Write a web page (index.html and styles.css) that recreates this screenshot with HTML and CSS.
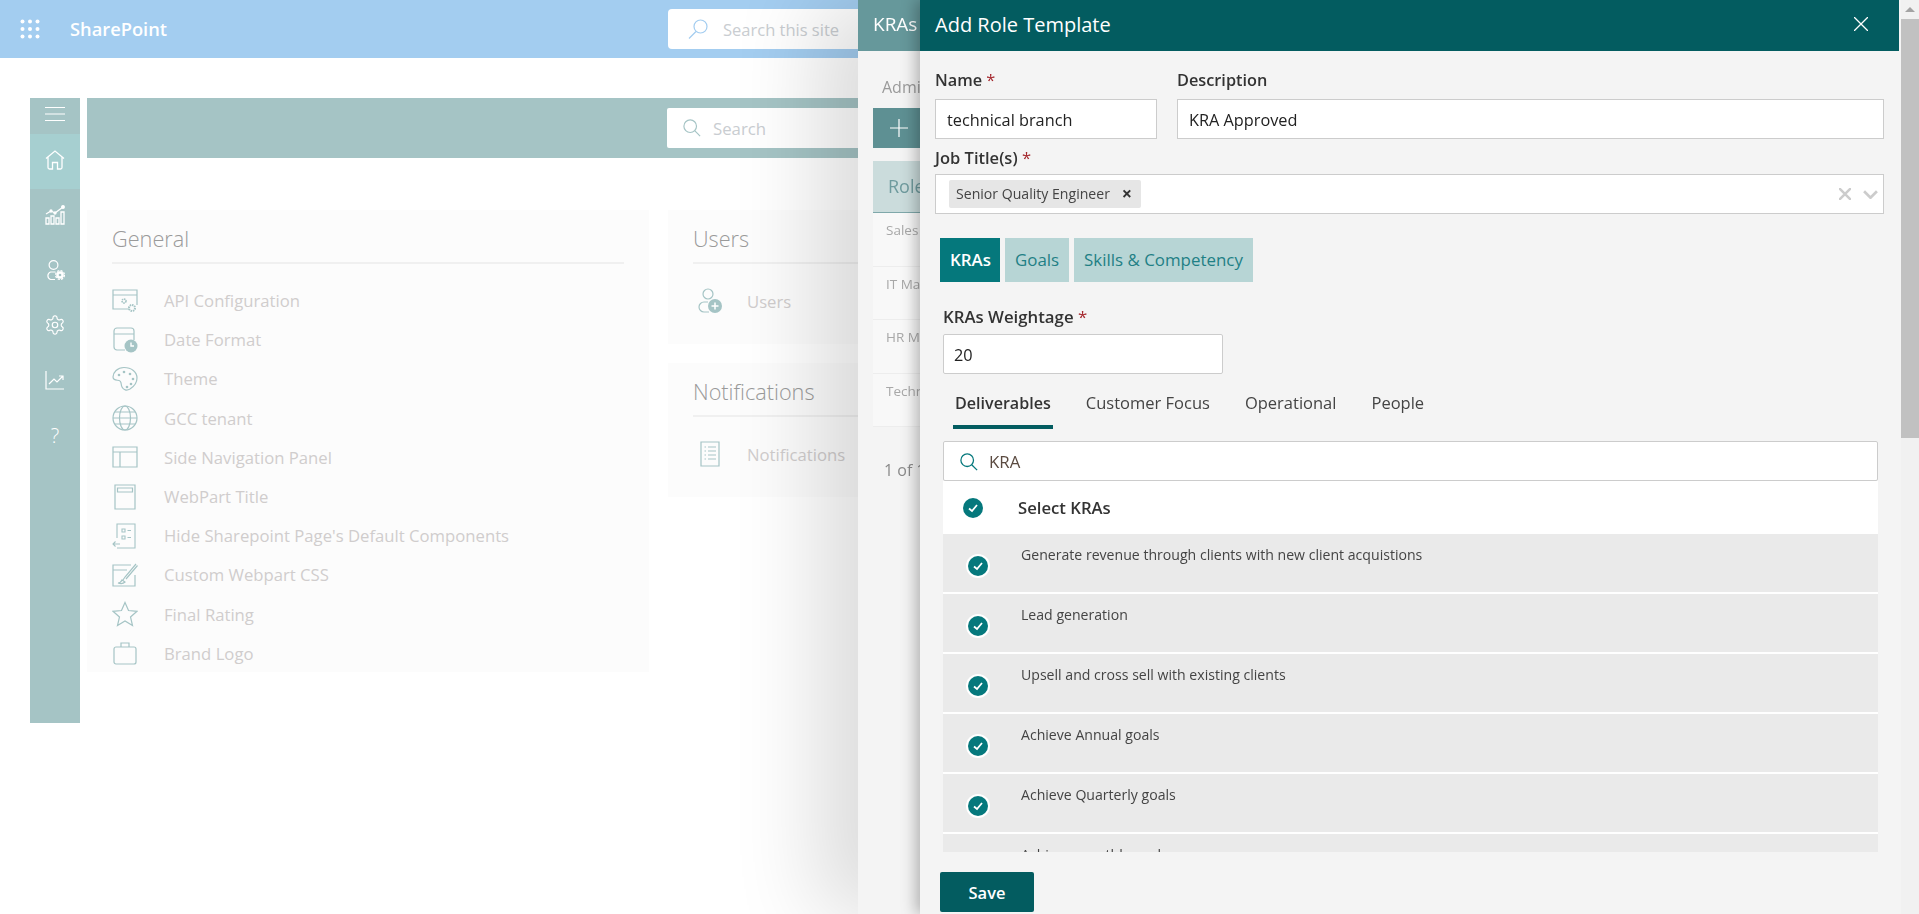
FILE: index.html
```html
<!DOCTYPE html>
<html lang="en">
<head>
    <meta charset="UTF-8">
    <title>Add Role Template</title>
    <link rel="stylesheet" href="styles.css">
</head>
<body>
    <!-- SharePoint top bar -->
    <header class="sp-bar">
        <svg class="waffle" viewBox="0 0 20 20"><g fill="#fff"><circle cx="2.5" cy="2.5" r="2"/><circle cx="10" cy="2.5" r="2"/><circle cx="17.5" cy="2.5" r="2"/><circle cx="2.5" cy="10" r="2"/><circle cx="10" cy="10" r="2"/><circle cx="17.5" cy="10" r="2"/><circle cx="2.5" cy="17.5" r="2"/><circle cx="10" cy="17.5" r="2"/><circle cx="17.5" cy="17.5" r="2"/></g></svg>
        <span class="sp-name">SharePoint</span>
        <div class="sp-search">
            <svg class="ico-20" viewBox="0 0 20 20" fill="none" stroke="#a3cdf0" stroke-width="1.2"><circle cx="12.5" cy="7.5" r="6.5"/><path d="M8 12.5 1 19.5"/></svg>
            <span>Search this site</span>
        </div>
    </header>

    <div class="page">
        <nav class="side">
            <div class="side-item side-menu"><svg class="ico-20" viewBox="0 0 20 20" stroke="#fff" stroke-width="1"><path d="M0 3.500h20M0 10h20M0 16.500h20"/></svg></div>
            <div class="side-item side-active"><svg class="ico-20" viewBox="0 0 20 20" fill="none" stroke="#fff" stroke-width="1.300"><path d="M1 8.500 10 1l9 7.500M3 7v10.500a1.500 1.500 0 0 0 1.500 1.500H7.500v-6.500h5V19h3a1.500 1.500 0 0 0 1.500-1.500V7"/></svg></div>
            <div class="side-item"><svg class="ico-20" viewBox="0 0 20 20" fill="none" stroke="#fff" stroke-width="1.300"><path d="M1 9l5-3 4 2 8-6"/><circle cx="6" cy="6" r="1" fill="#fff"/><circle cx="10" cy="8" r="1" fill="#fff"/><circle cx="18" cy="2" r="1.300" fill="#fff"/><path d="M1 13h3v6H1zM6 11h3v8H6zM11 13h3v6h-3zM16 7h3v12h-3z"/></svg></div>
            <div class="side-item"><svg class="ico-20" viewBox="0 0 20 20" fill="none" stroke="#fff" stroke-width="1.200"><circle cx="8.500" cy="5" r="4.400"/><path d="M10.500 12H5.500a4 4 0 0 0 0 7.500H10"/><circle cx="15" cy="15" r="3.800" fill="#fff" stroke="none"/><circle cx="15" cy="15" r="4.400" stroke-width="1.300" stroke-dasharray="2.200 1.250"/><circle cx="15" cy="15" r="1.300" fill="#a5c4c5" stroke="none"/></svg></div>
            <div class="side-item"><svg class="ico-20" viewBox="1 1 22 22" fill="none" stroke="#fff" stroke-width="1.300"><path d="M12.220 2h-.44a2 2 0 0 0-2 2v.18a2 2 0 0 1-1 1.730l-.43.25a2 2 0 0 1-2 0l-.15-.08a2 2 0 0 0-2.730.73l-.22.38a2 2 0 0 0 .73 2.730l.15.1a2 2 0 0 1 1 1.720v.51a2 2 0 0 1-1 1.740l-.15.09a2 2 0 0 0-.73 2.730l.22.38a2 2 0 0 0 2.730.73l.15-.08a2 2 0 0 1 2 0l.43.25a2 2 0 0 1 1 1.730V20a2 2 0 0 0 2 2h.44a2 2 0 0 0 2-2v-.18a2 2 0 0 1 1-1.730l.43-.25a2 2 0 0 1 2 0l.15.08a2 2 0 0 0 2.730-.73l.22-.39a2 2 0 0 0-.73-2.730l-.15-.08a2 2 0 0 1-1-1.740v-.5a2 2 0 0 1 1-1.740l.15-.09a2 2 0 0 0 .73-2.730l-.22-.38a2 2 0 0 0-2.730-.73l-.15.08a2 2 0 0 1-2 0l-.43-.25a2 2 0 0 1-1-1.730V4a2 2 0 0 0-2-2z"/><circle cx="12" cy="12" r="3"/></svg></div>
            <div class="side-item"><svg class="ico-20" viewBox="0 0 20 20" fill="none" stroke="#fff" stroke-width="1.200"><path d="M1 1v18h18M4 14l5-5 3 3 6-6M14 6h4v4"/></svg></div>
            <div class="side-item side-help">?</div>
        </nav>

        <main class="content">
            <div class="top-strip">
                <div class="strip-search">
                    <svg class="ico-18" viewBox="0 0 20 20" fill="none" stroke="#a5c4c5" stroke-width="1.300"><circle cx="8" cy="8" r="7"/><path d="m13 13 6 6"/></svg>
                    <span>Search</span>
                </div>
            </div>

            <div class="settings">
                <section class="card">
                    <h2>General</h2>
                    <ul class="card-list">
                        <li><svg class="ico-card" viewBox="0 0 26 26" fill="none" stroke="#a5c4c5" stroke-width="1.200"><path d="M17 21H1V2h24v15M1 7h24"/><circle cx="12" cy="13" r="2" stroke-dasharray="1.500 .6" stroke-width="1.600"/><circle cx="20" cy="20" r="3" stroke-dasharray="1.500 .8" stroke-width="2"/></svg>API Configuration</li>
                        <li><svg class="ico-card" viewBox="0 0 26 26" fill="none" stroke="#a5c4c5" stroke-width="1.200"><path d="M13 23H5a3 3 0 0 1-3-3V4a3 3 0 0 1 3-3h14a3 3 0 0 1 3 3v9M2 7h20"/><circle cx="19" cy="19" r="6.500" fill="#a5c4c5" stroke="none"/><path d="M19 15.500V19h3" stroke="#fff" stroke-width="1.400"/></svg>Date Format</li>
                        <li><svg class="ico-card" viewBox="0 0 26 26" fill="none" stroke="#a5c4c5" stroke-width="1.200"><path d="M12 1.500C5.500 1.500 1 6.500 1 11c0 3.500 3.500 3 6 3.500 3 .6 1.500 3.500 3 6.500 1.500 3 4.500 4 8 2 4-2.500 7-6 7-11C25 6 19.500 1.500 12 1.500Z"/><g fill="#a5c4c5" stroke="none"><circle cx="7" cy="9" r="1.300"/><circle cx="12" cy="6" r="1.300"/><circle cx="18" cy="8" r="1.300"/><circle cx="21" cy="13" r="1.300"/><circle cx="19" cy="18" r="1.300"/><circle cx="15" cy="21" r="1.300"/></g></svg>Theme</li>
                        <li><svg class="ico-card" viewBox="0 0 26 26" fill="none" stroke="#a5c4c5" stroke-width="1.200"><circle cx="13" cy="13" r="12"/><ellipse cx="13" cy="13" rx="5.500" ry="12"/><path d="M1 13h24M3 7h20M3 19h20"/></svg>GCC tenant</li>
                        <li><svg class="ico-card" viewBox="0 0 26 26" fill="none" stroke="#a5c4c5" stroke-width="1.200"><path d="M1 3h24v20H1zM1 8h24M8 8v15"/></svg>Side Navigation Panel</li>
                        <li><svg class="ico-card" viewBox="0 0 26 26" fill="none" stroke="#a5c4c5" stroke-width="1.200"><path d="M3 1h20v24H3zM5.500 4h15v4h-15z"/></svg>WebPart Title</li>
                        <li><svg class="ico-card" viewBox="0 0 26 26" fill="none" stroke="#a5c4c5" stroke-width="1.100"><path d="M5 15V1h18v24H5M8 21H1m2.500-2.500L1 21l2.500 2.500M10 6h3v3h-3zM10 13h3v3h-3zM15.500 7.500H19M15.500 14.500H19"/></svg>Hide Sharepoint Page's Default Components</li>
                        <li><svg class="ico-card" viewBox="0 0 26 26" fill="none" stroke="#a5c4c5" stroke-width="1.200"><path d="M23 13v11H1V3h18M1 8h14M24 2 13 15l-2 3M25.500 3.500 14 17"/><path d="M6 21c2 0 3-1 4-3l3 2c-1 1-4 2-7 1Z"/></svg>Custom Webpart CSS</li>
                        <li><svg class="ico-card" viewBox="0 0 26 26" fill="none" stroke="#a5c4c5" stroke-width="1.200"><path d="m13 1.500 3.500 8 8.500.8-6.500 5.700 2 8.500L13 20l-7.500 4.500 2-8.500L1 10.300l8.500-.8z"/></svg>Final Rating</li>
                        <li><svg class="ico-card" viewBox="0 0 26 26" fill="none" stroke="#a5c4c5" stroke-width="1.200"><path d="M4 7h18a2 2 0 0 1 2 2v13a2 2 0 0 1-2 2H4a2 2 0 0 1-2-2V9a2 2 0 0 1 2-2ZM9 7V3h8v4"/></svg>Brand Logo</li>
                    </ul>
                </section>
                <div class="settings-col">
                    <section class="card card-small">
                        <h2>Users</h2>
                        <ul class="card-list">
                            <li class="row-small"><svg class="ico-card" viewBox="0 0 26 26" fill="none" stroke="#a5c4c5" stroke-width="1.200"><circle cx="11" cy="6" r="5"/><path d="M11 14H7a5 5 0 0 0 0 10h5"/><circle cx="18" cy="18" r="7" fill="#a5c4c5" stroke="none"/><path d="M18 14.500v7M14.500 18h7" stroke="#fff" stroke-width="1.500"/></svg>Users</li>
                        </ul>
                    </section>
                    <section class="card card-small">
                        <h2>Notifications</h2>
                        <ul class="card-list">
                            <li class="row-small"><svg class="ico-card" viewBox="0 0 26 26" fill="none" stroke="#a5c4c5" stroke-width="1.200"><path d="M4 1h18v24H4zM7.500 6h1.500M11 6h8M7.500 10h1.500M11 10h8M7.500 14h1.500M11 14h8M7.500 18h1.500M11 18h8"/></svg>Notifications</li>
                        </ul>
                    </section>
                </div>
            </div>
        </main>
    </div>

    <!-- KRAs panel, mostly hidden behind the role template panel -->
    <aside class="panel-back">
        <div class="panel-back-head">KRAs</div>
        <div class="panel-back-body">
            <p class="back-crumb">Admin</p>
            <div class="back-add"><svg class="ico-18" viewBox="0 0 18 18" stroke="#fff" stroke-width="1.200"><path d="M9 0v18M0 9h18"/></svg></div>
            <div class="back-table">
                <div class="back-th">Role</div>
                <div class="back-td">Sales</div>
                <div class="back-td">IT Manager</div>
                <div class="back-td">HR Manager</div>
                <div class="back-td">Technical</div>
            </div>
            <p class="back-pager">1 of 1</p>
        </div>
    </aside>

    <!-- Add Role Template panel -->
    <aside class="panel">
        <div class="panel-head">
            <span>Add Role Template</span>
            <svg class="ico-close" viewBox="0 0 14 14" stroke="#fff" stroke-width="1.300"><path d="m0 0 14 14M14 0 0 14"/></svg>
        </div>
        <div class="panel-body">
            <div class="form-row">
                <div class="field field-name">
                    <label>Name <i>*</i></label>
                    <div class="input">technical branch</div>
                </div>
                <div class="field field-desc">
                    <label>Description</label>
                    <div class="input">KRA Approved</div>
                </div>
            </div>
            <div class="field">
                <label class="label-job">Job Title(s) <i>*</i></label>
                <div class="input multi">
                    <span class="chip">Senior Quality Engineer <b>×</b></span>
                    <svg class="multi-clear" viewBox="0 0 12 12" stroke="#ccc" stroke-width="2.500"><path d="m0 0 12 12M12 0 0 12"/></svg>
                    <svg class="multi-arrow" viewBox="0 0 14 8" fill="none" stroke="#ccc" stroke-width="2.500"><path d="m1 1 6 6 6-6"/></svg>
                </div>
            </div>

            <div class="tabs">
                <span class="tab tab-on">KRAs</span>
                <span class="tab">Goals</span>
                <span class="tab">Skills &amp; Competency</span>
            </div>

            <div class="kra-area">
                <div class="field">
                    <label class="label-weight">KRAs Weightage <i>*</i></label>
                    <div class="input input-weight">20</div>
                </div>

                <div class="pivots">
                    <span class="pivot pivot-on">Deliverables</span>
                    <span class="pivot">Customer Focus</span>
                    <span class="pivot">Operational</span>
                    <span class="pivot">People</span>
                </div>

                <div class="input kra-search">
                    <svg class="ico-18" viewBox="0 0 20 20" fill="none" stroke="#05787c" stroke-width="1.400"><circle cx="8" cy="8" r="7"/><path d="m13 13 6 6"/></svg>
                    <span>KRA</span>
                </div>

                <div class="select-all">
                    <svg class="check check-head" viewBox="0 0 20 20"><circle cx="10" cy="10" r="10" fill="#05787c"/><path d="m6 10.500 3 2.500 5-6" fill="none" stroke="#fff" stroke-width="1.800"/></svg>
                    <span>Select KRAs</span>
                </div>
                <div class="kra-list">
                    <div class="kra-row"><svg class="check" viewBox="0 0 24 24"><circle cx="12" cy="12" r="12" fill="#fff"/><circle cx="12" cy="12" r="10" fill="#05787c"/><path d="m8 12.500 3 2.500 5-6" fill="none" stroke="#fff" stroke-width="1.800"/></svg><span>Generate revenue through clients with new client acquistions</span></div>
                    <div class="kra-row"><svg class="check" viewBox="0 0 24 24"><circle cx="12" cy="12" r="12" fill="#fff"/><circle cx="12" cy="12" r="10" fill="#05787c"/><path d="m8 12.500 3 2.500 5-6" fill="none" stroke="#fff" stroke-width="1.800"/></svg><span>Lead generation</span></div>
                    <div class="kra-row"><svg class="check" viewBox="0 0 24 24"><circle cx="12" cy="12" r="12" fill="#fff"/><circle cx="12" cy="12" r="10" fill="#05787c"/><path d="m8 12.500 3 2.500 5-6" fill="none" stroke="#fff" stroke-width="1.800"/></svg><span>Upsell and cross sell with existing clients</span></div>
                    <div class="kra-row"><svg class="check" viewBox="0 0 24 24"><circle cx="12" cy="12" r="12" fill="#fff"/><circle cx="12" cy="12" r="10" fill="#05787c"/><path d="m8 12.500 3 2.500 5-6" fill="none" stroke="#fff" stroke-width="1.800"/></svg><span>Achieve Annual goals</span></div>
                    <div class="kra-row"><svg class="check" viewBox="0 0 24 24"><circle cx="12" cy="12" r="12" fill="#fff"/><circle cx="12" cy="12" r="10" fill="#05787c"/><path d="m8 12.500 3 2.500 5-6" fill="none" stroke="#fff" stroke-width="1.800"/></svg><span>Achieve Quarterly goals</span></div>
                    <div class="kra-row"><svg class="check" viewBox="0 0 24 24"><circle cx="12" cy="12" r="12" fill="#fff"/><circle cx="12" cy="12" r="10" fill="#05787c"/></svg><span>Achieve monthly goals</span></div>
                </div>
            </div>

            <button class="save">Save</button>
        </div>
    </aside>

    <!-- browser scrollbar -->
    <div class="scrollbar">
        <div class="scroll-up"></div>
        <div class="scroll-thumb"></div>
    </div>
</body>
</html>
```

FILE: styles.css
```css
* {
    box-sizing: border-box;
}
html, body {
    height: 100%;
}
body {
    margin: 0;
    background-color: #fff;
    font-family: "Open Sans", "Noto Sans", sans-serif;
    color: #333;
    overflow: hidden;
}
ul {
    list-style: none;
    margin: 0;
    padding: 0;
}
.ico-20 {
    width: 20px;
    height: 20px;
    flex: none;
}
.ico-18 {
    width: 18px;
    height: 18px;
    flex: none;
}

/* top bar */
.sp-bar {
    height: 58px;
    background-color: #a3cdf0;
    display: flex;
    align-items: center;
    padding-left: 20px;
}
.waffle {
    width: 20px;
    height: 20px;
}
.sp-name {
    margin-left: 30px;
    margin-bottom: 2px;
    width: 598px;
    color: #fff;
    font-size: 18.300px;
    font-weight: 600;
}
.sp-search {
    width: 300px;
    height: 40px;
    background-color: #fff;
    border-radius: 4px;
    display: flex;
    align-items: center;
    padding-left: 20px;
    gap: 15px;
    font-size: 16.500px;
    color: #c9cdd1;
}

/* page */
.page {
    display: flex;
    padding: 40px 0 0 30px;
}
.side {
    width: 50px;
    height: 625px;
    background-color: #a5c4c5;
    flex: none;
}
.side-item {
    height: 55px;
    padding-bottom: 3px;
    display: flex;
    align-items: center;
    justify-content: center;
}
.side-menu {
    height: 36px;
    padding-bottom: 5px;
}
.side-active {
    background-color: #a6cfd0;
    padding-bottom: 4px;
}
.side-help {
    color: #fff;
    font-size: 20px;
    font-weight: 300;
}
.content {
    margin-left: 7px;
    flex: 1;
}
.top-strip {
    height: 60px;
    background-color: #a5c4c5;
    padding: 10px 0 0 580px;
}
.strip-search {
    width: 300px;
    height: 40px;
    background-color: #fff;
    border-radius: 2px;
    display: flex;
    align-items: center;
    padding-left: 16px;
    gap: 12px;
    font-size: 16.800px;
    color: #c9cdd1;
}
.settings {
    display: flex;
    gap: 19px;
    margin-top: 52px;
    align-items: flex-start;
}
.card {
    width: 562px;
    height: 462px;
    background-color: #fcfcfc;
    padding: 11px 25px 0;
}
.card h2 {
    margin: 0;
    height: 43px;
    font-size: 21.700px;
    line-height: 36px;
    font-weight: 300;
    color: #9a9a9a;
    border-bottom: 2px solid #f0f0f0;
}
.card-list {
    padding-top: 17px;
}
.card-list li {
    height: 39.200px;
    display: flex;
    align-items: center;
    gap: 26px;
    font-size: 16.700px;
    color: #d0cdcd;
}
.ico-card {
    width: 26px;
    height: 26px;
    flex: none;
}
.settings-col {
    display: flex;
    flex-direction: column;
    gap: 19px;
}
.card-small {
    width: 560px;
    height: 134px;
}
.card-list .row-small {
    height: 40px;
    padding-left: 4px;
    gap: 24px;
}

/* back panel */
.panel-back {
    position: fixed;
    top: 0;
    left: 858px;
    right: 0;
    bottom: 0;
    background-color: #f4f4f4;
    box-shadow: -40px 0 80px rgba(0, 0, 0, 0.14);
}
.panel-back-head {
    height: 51px;
    background-color: #66989b;
    color: #fff;
    font-size: 19px;
    line-height: 48px;
    padding-left: 15px;
}
.panel-back-body {
    padding: 0 0 0 15px;
}
.back-crumb {
    margin: 24px 0 0 9px;
    height: 33px;
    font-size: 16px;
    line-height: 24px;
    color: #9a9a9a;
}
.back-add {
    width: 60px;
    height: 40px;
    background-color: #5e9093;
    display: flex;
    align-items: center;
    padding-left: 17px;
}
.back-table {
    margin-top: 13px;
    width: 300px;
    background-color: #f8f8f8;
}
.back-th {
    height: 52px;
    background-color: #cbdcdc;
    border-bottom: 1px solid #7fa8aa;
    color: #6f9b9e;
    font-size: 18px;
    line-height: 50px;
    padding-left: 15px;
}
.back-td {
    height: 53.500px;
    border-bottom: 1px solid #ededed;
    padding: 8px 0 0 13px;
    font-size: 13.500px;
    color: #a8a8a8;
}
.back-pager {
    margin: 32px 0 0 11px;
    font-size: 16px;
    color: #8a8a8a;
}

/* main panel */
.panel {
    position: fixed;
    top: 0;
    left: 920px;
    width: 981px;
    bottom: 0;
    background-color: #f4f4f4;
    box-shadow: -4px 0 14px rgba(0, 0, 0, 0.28);
    display: flex;
    flex-direction: column;
}
.panel-head {
    height: 51px;
    width: 979px;
    flex: none;
    background-color: #035c60;
    color: #fff;
    font-size: 20px;
    display: flex;
    align-items: center;
    justify-content: space-between;
    padding: 0 31px 3px 15px;
}
.ico-close {
    width: 14px;
    height: 14px;
}
.panel-body {
    flex: 1;
    padding: 0 0 0 15px;
    display: flex;
    flex-direction: column;
    min-height: 0;
}
.form-row {
    display: flex;
    gap: 20px;
    width: 949px;
}
.field label {
    display: block;
    padding-top: 21px;
    height: 48px;
    font-size: 16.300px;
    line-height: 17px;
    font-weight: 600;
    color: #333;
}
.field label i {
    color: #a4262c;
    font-style: normal;
    font-weight: 400;
}
.field-name {
    width: 222px;
}
.field-desc {
    flex: 1;
}
.input {
    height: 40px;
    background-color: #fff;
    border: 1px solid #ccc;
    display: flex;
    align-items: center;
    padding-left: 11px;
    padding-top: 1px;
    font-size: 16.300px;
    color: #222;
}
.field .label-job {
    height: 35px;
    padding-top: 10px;
    font-size: 16.500px;
}
.multi {
    width: 949px;
    padding-left: 13px;
    padding-top: 0;
}
.chip {
    height: 28px;
    width: 192px;
    background-color: #e6e6e6;
    border-radius: 2px;
    padding-left: 7px;
    font-size: 14.100px;
    line-height: 28px;
    color: #444;
    display: flex;
    justify-content: space-between;
    padding-right: 9px;
}
.chip b {
    font-size: 18px;
    line-height: 26px;
    color: #333;
}
.multi-clear {
    width: 12px;
    height: 12px;
    margin-left: auto;
}
.multi-arrow {
    width: 15px;
    height: 9px;
    margin: 0 5px 0 12px;
}

/* tabs */
.tabs {
    display: flex;
    gap: 5px;
    margin: 24px 0 0 5px;
}
.tab {
    height: 44px;
    padding: 0 10px;
    background-color: #b7d5d5;
    color: #1f8085;
    font-size: 16.900px;
    line-height: 43px;
}
.tab-on {
    background-color: #05787c;
    color: #fff;
    font-weight: 600;
    padding-right: 9px;
}
.kra-area {
    margin-left: 8px;
    width: 935px;
    flex: 1;
    min-height: 0;
    display: flex;
    flex-direction: column;
    overflow: hidden;
}
.field .label-weight {
    height: 52px;
    padding-top: 26px;
    font-size: 16.800px;
}
.input-weight {
    width: 280px;
    border-radius: 2px;
    font-size: 16.300px;
    padding-left: 10px;
}
.pivots {
    display: flex;
    gap: 35px;
    margin: 11px 0 0 12px;
    height: 44px;
    flex: none;
}
.pivot {
    font-size: 16.500px;
    line-height: 36px;
    color: #444;
}
.pivot-on {
    font-size: 16.100px;
    font-weight: 600;
    color: #333;
    height: 44px;
    border-bottom: 4px solid #035c60;
    padding: 0 2px;
    margin-left: -2px;
    margin-right: -2px;
}
.kra-search {
    flex: none;
    margin-top: 12px;
    border-radius: 2px;
    padding-left: 16px;
    gap: 11px;
    color: #5a4a40;
    font-size: 16.800px;
}
.select-all {
    height: 53px;
    flex: none;
    background-color: #fff;
    display: flex;
    align-items: center;
    padding: 0 0 0 20px;
    gap: 35px;
    font-size: 16.700px;
    font-weight: 600;
    color: #333;
}
.check {
    width: 24px;
    height: 24px;
    flex: none;
    margin: 18px 0 0 23px;
}
.check-head {
    width: 20px;
    height: 20px;
    margin: 0;
}
.kra-list {
    flex: 1;
    min-height: 0;
    overflow: hidden;
}
.kra-row {
    height: 60px;
    background-color: #eaeaea;
    border-bottom: 2px solid #fff;
    display: flex;
    gap: 31px;
    padding-top: 11px;
    font-size: 14.100px;
    color: #444;
}
.kra-row .check {
    margin-top: 9px;
}
.save {
    flex: none;
    width: 94px;
    height: 40px;
    margin: 20px 0 2px 5px;
    background-color: #035c60;
    color: #fff;
    border: none;
    border-radius: 2px;
    font-family: inherit;
    font-size: 16.500px;
    font-weight: 600;
}

/* scrollbar */
.scrollbar {
    position: fixed;
    top: 0;
    right: 0;
    width: 18px;
    height: 100%;
    background-color: #f1f1f1;
}
.scroll-up {
    height: 19px;
    display: flex;
    justify-content: center;
    padding-top: 7px;
}
.scroll-up::before {
    content: "";
    border-left: 5px solid transparent;
    border-right: 5px solid transparent;
    border-bottom: 5px solid #a3a3a3;
    height: 0;
}
.scroll-thumb {
    height: 419px;
    background-color: #c1c1c1;
}
```
